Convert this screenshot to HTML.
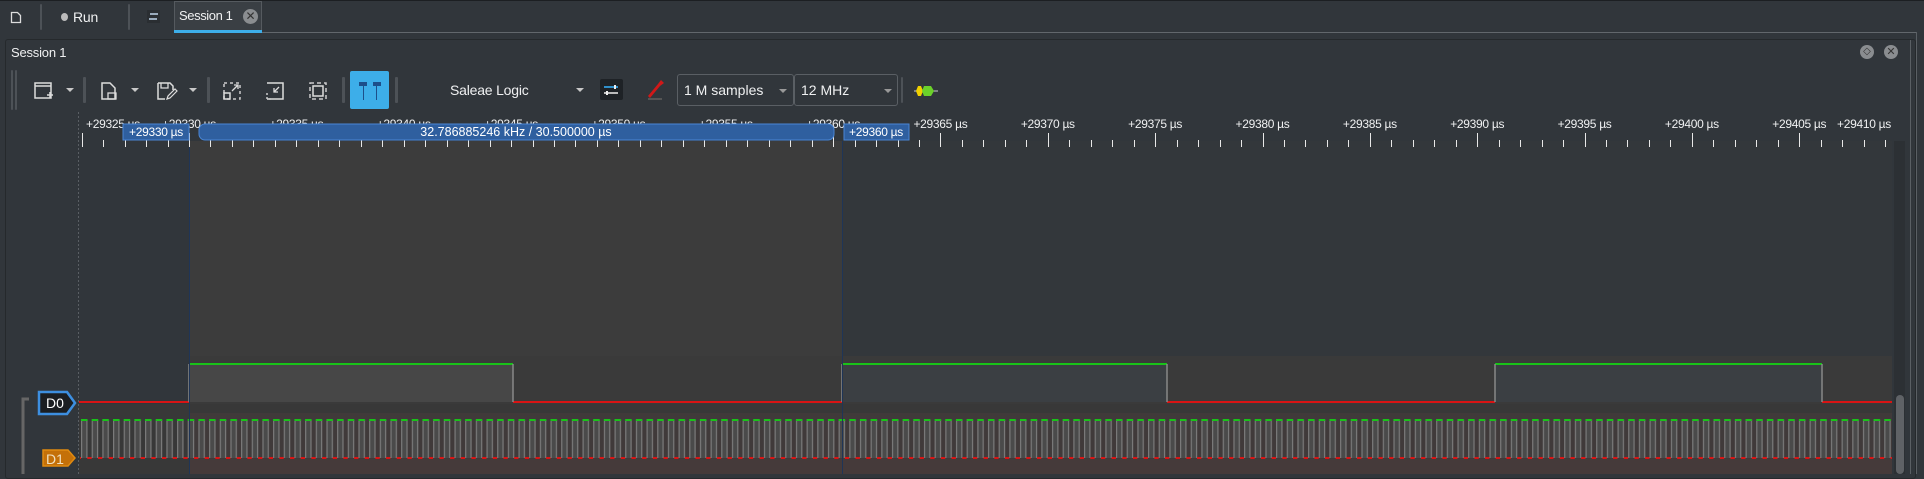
<!DOCTYPE html>
<html><head><meta charset="utf-8"><style>
*{margin:0;padding:0;box-sizing:border-box}
body{width:1924px;height:474px;background:#31363b;overflow:hidden;position:relative;font-family:"Liberation Sans",sans-serif;color:#eff0f1}
.a{position:absolute}
.sep{position:absolute;width:3px;background:#4d5257;border-radius:1px}
.txt{position:absolute;font-size:13px;white-space:nowrap;letter-spacing:-0.2px}
.arr{position:absolute;width:0;height:0;border-left:4px solid transparent;border-right:4px solid transparent;border-top:4px solid #c8c8c8}
.combo{position:absolute;border:1px solid #5a5f64;border-radius:3px;top:74px;height:32px;font-size:14px;line-height:30px;padding-left:6px;color:#eff0f1}
</style></head><body>
<div class="a" style="left:0;top:0;width:1924px;height:1px;background:#1c1f22"></div>
<svg class="a" style="left:10px;top:11px" width="12" height="13"><path d="M1.5 1.5h6l3 3v7h-9z" fill="none" stroke="#ddd" stroke-width="1.3"/></svg>
<div class="sep" style="left:40px;top:4px;height:26px;width:2px"></div>
<div class="a" style="left:61px;top:13px;width:7px;height:8px;border-radius:50%;background:#bbb"></div>
<div class="txt" style="left:73px;top:9px;font-size:14px">Run</div>
<div class="sep" style="left:128px;top:4px;height:26px;width:2px"></div>
<svg class="a" style="left:147px;top:10px" width="13" height="13"><rect x="0" y="0" width="13" height="13" fill="#2a2e32"/><rect x="3" y="3" width="8" height="2" fill="#9ab"/><rect x="2" y="8" width="8" height="2" fill="#9ab"/></svg>
<div class="a" style="left:174px;top:1px;width:88px;height:32px;background:#3a3f44;border:1px solid #555a5f;border-bottom:none"></div>
<div class="a" style="left:174px;top:30px;width:88px;height:3px;background:#3daee9"></div>
<div class="txt" style="left:179px;top:8px;font-size:13px;letter-spacing:-0.4px">Session 1</div>
<div class="a" style="left:243px;top:9px;width:15px;height:15px;border-radius:50%;background:#8a8d90;color:#333;font-size:12px;line-height:15px;text-align:center">✕</div>
<div class="a" style="left:262px;top:32px;width:1654px;height:1px;background:#62676c"></div>
<div class="a" style="left:5px;top:39px;width:1911px;height:440px;border:1px solid #25292c;border-radius:3px"></div>
<div class="txt" style="left:11px;top:45px">Session 1</div>
<div class="a" style="left:1860px;top:45px;width:14px;height:14px;border-radius:50%;background:#8a8d90;color:#333;font-size:10px;line-height:14px;text-align:center">◇</div>
<div class="a" style="left:1884px;top:45px;width:14px;height:14px;border-radius:50%;background:#8a8d90;color:#333;font-size:11px;line-height:14px;text-align:center">✕</div>
<div class="sep" style="left:11px;top:70px;height:40px;width:2px"></div>
<div class="sep" style="left:15px;top:70px;height:40px;width:2px"></div>
<svg class="a" style="left:33px;top:81px" width="22" height="20"><path d="M2 2h16v15H2z M2 5h16" fill="none" stroke="#ddd" stroke-width="1.5"/><path d="M14 14h6M17 11v6" stroke="#ddd" stroke-width="1.5"/></svg>
<div class="arr" style="left:66px;top:88px"></div>
<div class="sep" style="left:83px;top:77px;height:26px"></div>
<svg class="a" style="left:100px;top:81px" width="18" height="20"><path d="M2 2h8l5 5v11H2z" fill="none" stroke="#ddd" stroke-width="1.5"/><rect x="8" y="12" width="8" height="6" fill="none" stroke="#ddd" stroke-width="1.3"/></svg>
<div class="arr" style="left:131px;top:88px"></div>
<svg class="a" style="left:156px;top:81px" width="22" height="20"><path d="M2 2h12l3 3v4M2 2v16h7" fill="none" stroke="#ddd" stroke-width="1.5"/><path d="M5 2v5h7V2" fill="none" stroke="#ddd" stroke-width="1.3"/><path d="M11 18l1-3 7-7 2 2-7 7z" fill="none" stroke="#ddd" stroke-width="1.2"/></svg>
<div class="arr" style="left:189px;top:88px"></div>
<div class="sep" style="left:207px;top:77px;height:26px"></div>
<svg class="a" style="left:222px;top:81px" width="20" height="20"><path d="M2 2h16v16H2z" fill="none" stroke="#ccc" stroke-width="1.5" stroke-dasharray="3 3"/><rect x="2" y="12" width="6" height="6" fill="none" stroke="#ddd" stroke-width="1.5"/><path d="M10 10l6-6M12 4h4v4" fill="none" stroke="#ddd" stroke-width="1.3"/></svg>
<svg class="a" style="left:265px;top:81px" width="20" height="20"><path d="M2 2h16v16H2" fill="none" stroke="#ddd" stroke-width="1.5"/><path d="M2 12v6h6" fill="none" stroke="#ccc" stroke-width="1.5" stroke-dasharray="2 2"/><path d="M14 6l-5 5M9 7v4h4" fill="none" stroke="#ddd" stroke-width="1.3"/></svg>
<svg class="a" style="left:308px;top:81px" width="20" height="20"><path d="M2 2h16v16H2z" fill="none" stroke="#ccc" stroke-width="1.5" stroke-dasharray="4 3"/><rect x="5" y="5" width="10" height="10" fill="none" stroke="#ddd" stroke-width="1.5"/></svg>
<div class="sep" style="left:342px;top:77px;height:26px"></div>
<div class="a" style="left:350px;top:71px;width:39px;height:38px;background:#3daee9;border-radius:2px"></div>
<svg class="a" style="left:357px;top:80px" width="26" height="22"><path d="M2 2h8v4H7v14H6V6H2z M16 2h8v4h-4v14h-1V6h-3z" fill="#1d4f8a"/></svg>
<div class="sep" style="left:395px;top:77px;height:26px"></div>
<div class="txt" style="left:450px;top:82px;font-size:14px">Saleae Logic</div>
<div class="arr" style="left:576px;top:88px"></div>
<svg class="a" style="left:600px;top:79px" width="23" height="21"><rect width="23" height="21" rx="2" fill="#1e2226"/><rect x="4" y="7" width="14" height="2" fill="#2f8fc9"/><rect x="4" y="13" width="14" height="2" fill="#bbb"/><rect x="14" y="6" width="2" height="4" fill="#eee"/><rect x="6" y="12" width="2" height="4" fill="#eee"/></svg>
<svg class="a" style="left:644px;top:78px" width="22" height="24"><path d="M4 18L14 6l3-4 3 3-4 3L6 20z" fill="#d01818"/><path d="M4 21h14" stroke="#555" stroke-width="2"/></svg>
<div class="combo" style="left:677px;width:117px">1 M samples</div>
<div class="arr" style="left:779px;top:89px;border-top-color:#999"></div>
<div class="combo" style="left:794px;width:104px">12 MHz</div>
<div class="arr" style="left:884px;top:89px;border-top-color:#999"></div>
<div class="sep" style="left:901px;top:77px;height:26px;width:2px"></div>
<svg class="a" style="left:914px;top:84px" width="24" height="14"><path d="M0 7h24" stroke="#ccc" stroke-width="1"/><path d="M4 2h3l2 5-2 5H4L2 7z" fill="#f0d000"/><path d="M10 2h7l3 5-3 5h-7l-2-5z" fill="#6bd12a"/></svg>
<svg class="a" style="left:0;top:0" width="1924" height="474">
<defs>
<pattern id="p1" x="81" y="0" width="10.67" height="474" patternUnits="userSpaceOnUse">
<rect x="0" y="420" width="6.3" height="38" fill="#4a4a4a"/>
<rect x="0" y="420" width="1.2" height="38" fill="#7a7a7a"/><rect x="5.3" y="420" width="1.2" height="38" fill="#7a7a7a"/>
<rect x="0" y="419" width="6.5" height="2" fill="#19c219"/>
<rect x="6.3" y="457" width="4.4" height="2" fill="#d81414"/>
</pattern>
</defs>
<rect x="79" y="141" width="1813" height="333" fill="#33373b"/>
<rect x="79" y="356" width="1813" height="48" fill="#3a3a3a"/>
<rect x="79" y="404" width="1813" height="9" fill="#383838"/>
<rect x="79" y="413" width="1813" height="61" fill="#403a3a"/>
<rect x="79" y="459" width="1813" height="15" fill="#453a3a"/>
<rect x="79" y="141" width="110" height="215" fill="#31363b"/>
<rect x="79" y="356" width="110" height="48" fill="#31363b"/>
<rect x="79" y="404" width="110" height="70" fill="#383838"/>
<rect x="189" y="141" width="653" height="215" fill="#3c3c3c"/>
<rect x="189" y="364" width="324" height="38" fill="#474747"/>
<rect x="842" y="364" width="325" height="38" fill="#3b3f43"/>
<rect x="1495" y="364" width="327" height="38" fill="#3b3f43"/>
<path d="M79 402H189M513 402H842M1167 402H1495M1822 402H1892" fill="none" stroke="#d81414" stroke-width="2"/>
<path d="M189 364H513M842 364H1167M1495 364H1822" stroke="#19c219" stroke-width="2"/>
<path d="M189 364V402M513 364V402M842 364V402M1167 364V402M1495 364V402M1822 364V402" stroke="#888" stroke-width="1.5"/>
<rect x="80" y="410" width="1812" height="50" fill="url(#p1)"/>
<path d="M189.5 141V474M842.5 141V474" stroke="#1f3557" stroke-width="1"/>
<path d="M78.5 112V474" stroke="#5a5f64" stroke-dasharray="2 2"/>
<g stroke="#e8e8e8" stroke-width="1" id="ticks"></g>
<g font-family="Liberation Sans" font-size="12" fill="#eff0f1" text-anchor="middle" id="labels" letter-spacing="-0.3"></g>
<rect x="123" y="124" width="66" height="16" fill="#2f5f9f" stroke="#4a86d4"/>
<text x="156" y="136" font-family="Liberation Sans" font-size="12" letter-spacing="-0.3" fill="#fff" text-anchor="middle">+29330 µs</text>
<rect x="199" y="124" width="635" height="16" rx="6" fill="#2f5f9f" stroke="#4a86d4"/>
<text x="516" y="136" font-family="Liberation Sans" font-size="12.5" fill="#fff" text-anchor="middle">32.786885246 kHz / 30.500000 µs</text>
<rect x="844" y="124" width="65" height="16" fill="#2f5f9f" stroke="#4a86d4"/>
<text x="876" y="136" font-family="Liberation Sans" font-size="12" letter-spacing="-0.3" fill="#fff" text-anchor="middle">+29360 µs</text>
<path d="M23 474V399h6" fill="none" stroke="#666" stroke-width="3"/>
<path d="M39 392h28l8 11-8 11H39z" fill="#1b1e21" stroke="#3d8fe0" stroke-width="2.5"/>
<text x="55" y="408" font-family="Liberation Sans" font-size="14" fill="#fff" text-anchor="middle">D0</text>
<path d="M43 450h25l7 8-7 8H43z" fill="#c47008" stroke="#e08a10" stroke-width="1.5"/>
<text x="55" y="464" font-family="Liberation Sans" font-size="14" fill="#f0e0c0" text-anchor="middle">D1</text>
<rect x="1894" y="141" width="11" height="333" fill="#2c3034"/>
<rect x="1896" y="395" width="8" height="79" rx="4" fill="#5f6266"/>
<path d="M1910.5 40V474M1916.5 32V474" stroke="#5a5f64"/>
</svg>
<script>
var t=document.getElementById('ticks'),l=document.getElementById('labels'),s='';
var x0=189,k=21.47;
for(var v=29325;v<=29410;v++){var x=Math.round(x0+(v-29330)*k)+0.5;if(x<80||x>1890)continue;
var maj=(v%5==0);s+='<path d="M'+x+' '+(maj?133:140)+'V147"/>';}
t.innerHTML=s;s='';
for(var v=29325;v<=29410;v+=5){var x=x0+(v-29330)*k;if(v==29325)x=113;if(v==29410)x=1864;s+='<text x="'+x+'" y="128">+'+v+' µs</text>';}
l.innerHTML=s;
</script>
</body></html>
